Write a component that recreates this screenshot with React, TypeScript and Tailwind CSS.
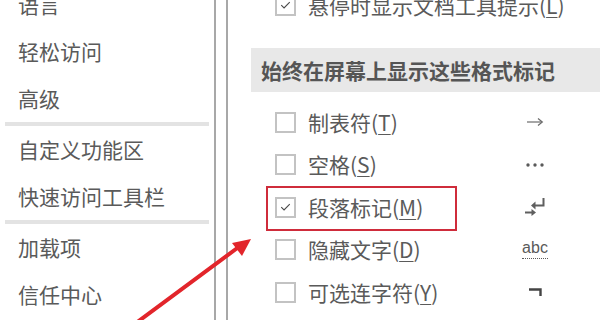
import React from "react";

const Check = () => (
  <svg width="20" height="20" viewBox="0 0 20 20" className="block">
    <path d="M5 10.2 L8.3 13.4 L15 6.6" fill="none" stroke="#4a4a4a" strokeWidth="1.3" />
  </svg>
);

function Box({ checked }: { checked?: boolean }) {
  return (
    <div className="w-[21px] h-[21px] border-2 border-[#c3c3c3] bg-white flex items-center justify-center shrink-0">
      {checked ? <Check /> : null}
    </div>
  );
}

function Label({ text, k }: { text: string; k: string }) {
  return (
    <span className="text-[21px] text-[#5a5a5a] leading-none whitespace-nowrap">
      {text}(<span className="underline underline-offset-[3px] decoration-1">{k}</span>)
    </span>
  );
}

const ArrowSym = () => (
  <svg width="18" height="10" viewBox="0 0 18 10">
    <path d="M1 5 H16" stroke="#6a6a6a" strokeWidth="1.2" />
    <path d="M12 1.5 L16.3 5 L12 8.5" fill="none" stroke="#6a6a6a" strokeWidth="1.2" />
  </svg>
);

const DotsSym = () => (
  <svg width="20" height="6" viewBox="0 0 20 6">
    <circle cx="3" cy="3" r="1.7" fill="#5a5a5a" />
    <circle cx="10" cy="3" r="1.7" fill="#5a5a5a" />
    <circle cx="17" cy="3" r="1.7" fill="#5a5a5a" />
  </svg>
);

const ParaSym = () => (
  <svg width="22" height="20" viewBox="0 0 22 20">
    <path d="M19.5 1 V8.5 H11" fill="none" stroke="#5f5f5f" strokeWidth="2" />
    <path d="M7 8.5 L11.5 4.5 L11.5 12.5 Z" fill="#5f5f5f" />
    <path d="M1 15.5 H8" stroke="#5f5f5f" strokeWidth="2" />
    <path d="M12 15.5 L7.5 12 L7.5 19 Z" fill="#5f5f5f" />
  </svg>
);

const AbcSym = () => (
  <span className="font-['Liberation_Sans',sans-serif] text-[16px] leading-none text-[#5a5a5a] border-b border-dotted border-[#5a5a5a] pb-[2px]">
    abc
  </span>
);

const NotSym = () => (
  <svg width="14" height="8" viewBox="0 0 14 8">
    <path d="M1 1.5 H12.5 V8" fill="none" stroke="#444" strokeWidth="2.4" />
  </svg>
);

function Row({
  text,
  k,
  checked,
  sym,
  boxed,
}: {
  text: string;
  k: string;
  checked?: boolean;
  sym: React.ReactNode;
  boxed?: boolean;
}) {
  return (
    <div className="relative h-[42.5px] flex items-center pl-[47px]">
      {boxed ? (
        <div className="absolute left-[38px] top-0 w-[191px] h-[45px] border-2 border-[#cf2c3b]" />
      ) : null}
      <div className="w-[245px] flex items-center gap-[12px]">
        <Box checked={checked} />
        <Label text={text} k={k} />
      </div>
      <div className="w-[30px] flex items-center justify-center">{sym}</div>
    </div>
  );
}

function NavItem({ children }: { children: React.ReactNode }) {
  return (
    <div className="h-[47px] flex items-center pl-[18px] text-[21px] text-[#5a5a5a] leading-none whitespace-nowrap">
      {children}
    </div>
  );
}

const Sep = () => <div className="ml-[5px] w-[204px] h-[4px] bg-[#e3e3e3]" />;

export default function App() {
  return (
    <div className="relative w-[600px] h-[320px] overflow-hidden bg-white font-['Noto_Sans_CJK_SC','Noto_Sans',sans-serif] flex">
      <div className="w-[214px] shrink-0 flex flex-col -mt-[19px]">
        <NavItem>语言</NavItem>
        <NavItem>轻松访问</NavItem>
        <NavItem>高级</NavItem>
        <Sep />
        <NavItem>自定义功能区</NavItem>
        <NavItem>快速访问工具栏</NavItem>
        <Sep />
        <NavItem>加载项</NavItem>
        <NavItem>信任中心</NavItem>
      </div>
      <div className="w-[2px] shrink-0 bg-[#a8a8a8]" />
      <div className="w-[10px] shrink-0" />
      <div className="w-[2px] shrink-0 bg-[#a8a8a8]" />
      <div className="flex-1 flex flex-col">
        <div className="h-[40px] -mt-[15px] flex items-center pl-[47px] gap-[12px] shrink-0">
          <Box checked />
          <Label text="悬停时显示文档工具提示" k="L" />
        </div>
        <div className="ml-[23px] mt-[23px] h-[44px] bg-[#e8e8e8] flex items-center pl-[10px] shrink-0">
          <span className="text-[21px] font-bold text-[#555555] leading-none whitespace-nowrap">
            始终在屏幕上显示这些格式标记
          </span>
        </div>
        <div className="mt-[9px] flex flex-col">
          <Row text="制表符" k="T" sym={<ArrowSym />} />
          <Row text="空格" k="S" sym={<DotsSym />} />
          <Row text="段落标记" k="M" checked boxed sym={<ParaSym />} />
          <Row text="隐藏文字" k="D" sym={<AbcSym />} />
          <Row text="可选连字符" k="Y" sym={<NotSym />} />
        </div>
      </div>
      <svg className="absolute inset-0 pointer-events-none" width="600" height="320" viewBox="0 0 600 320">
        <path d="M132 326 L240 246" stroke="#e2252b" strokeWidth="4" strokeLinecap="round" />
        <path d="M251 239 L232 243 L242 256 Z" fill="#e2252b" />
      </svg>
    </div>
  );
}
